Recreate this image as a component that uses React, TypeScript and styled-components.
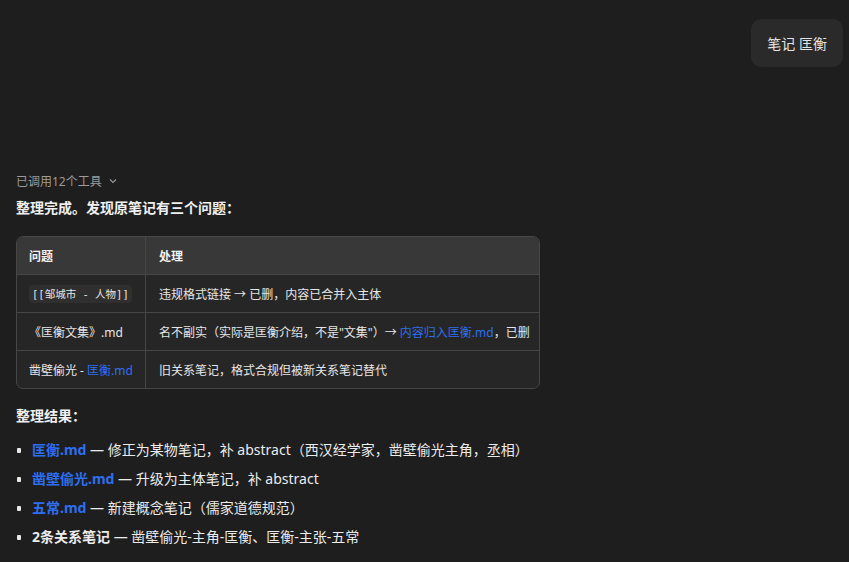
import React from "react";
import styled, { createGlobalStyle } from "styled-components";

const GlobalStyle = createGlobalStyle`
  html, body {
    margin: 0;
    padding: 0;
    background: #1e1e1e;
  }
  body {
    font-family: "Noto Sans", "Noto Sans CJK SC", sans-serif;
    color: #e8e8e8;
  }
`;

const Page = styled.div`
  padding: 19px 6px 0 16px;
  min-height: 562px;
  box-sizing: border-box;
`;

const UserRow = styled.div`
  display: flex;
  justify-content: flex-end;
`;

const Bubble = styled.div`
  background: #2a2a2a;
  border-radius: 10px;
  padding: 0 16px;
  height: 48px;
  display: flex;
  align-items: center;
  font-size: 14px;
  color: #e4e4e4;
`;

const ToolLine = styled.div`
  margin-top: 105px;
  display: flex;
  align-items: center;
  gap: 6px;
  font-size: 12px;
  color: #9b9b9b;
  height: 18px;
`;

const Para = styled.p<{ $top: number }>`
  margin: ${(p) => p.$top}px 0 0;
  font-size: 14px;
  font-weight: 700;
  line-height: 20px;
  color: #f0f0f0;
`;

const TableWrap = styled.div`
  margin-top: 18px;
  display: inline-block;
  border: 1px solid #464646;
  border-radius: 7px;
  overflow: hidden;
  background: #262626;
`;

const Table = styled.table`
  border-collapse: collapse;
  font-size: 12px;
`;

const Th = styled.th`
  background: #383838;
  text-align: left;
  font-weight: 700;
  color: #f2f2f2;
  padding: 0 12px;
  height: 37px;
  & + & {
    border-left: 1px solid #464646;
    padding: 0 9px 0 13px;
  }
`;

const Tr = styled.tr`
  border-top: 1px solid #464646;
`;

const Td = styled.td`
  padding: 0 12px;
  height: 37px;
  color: #e6e6e6;
  white-space: nowrap;
  & + & {
    border-left: 1px solid #464646;
    padding: 0 9px 0 13px;
  }
`;

const Code = styled.code`
  font-family: "DejaVu Sans Mono", "Noto Sans CJK SC", monospace;
  font-size: 10.5px;
  background: #2f2f2f;
  border-radius: 4px;
  padding: 3px 3px;
`;

const Link = styled.span<{ $bold?: boolean }>`
  color: #2d6ff0;
  font-weight: ${(p) => (p.$bold ? 700 : 400)};
`;

const List = styled.ul`
  margin: 14px 0 0;
  padding: 0;
  list-style: none;
  display: flex;
  flex-direction: column;
  gap: 9px;
`;

const Item = styled.li`
  position: relative;
  padding-left: 16px;
  font-size: 14px;
  line-height: 20px;
  color: #ececec;
  &::before {
    content: "";
    position: absolute;
    left: 1px;
    top: 8px;
    width: 4px;
    height: 5px;
    border-radius: 1px;
    background: #e8e8e8;
  }
`;

const Strong = styled.b`
  font-weight: 700;
`;

const Chevron = () => (
  <svg width="10" height="10" viewBox="0 0 10 10" fill="none">
    <path d="M2 3.5 L5 6.5 L8 3.5" stroke="#9b9b9b" strokeWidth="1.1" />
  </svg>
);

const rows = [
  {
    issue: <Code>[[邹城市 - 人物]]</Code>,
    fix: <>违规格式链接 → 已删，内容已合并入主体</>,
  },
  {
    issue: <>《匡衡文集》.md</>,
    fix: (
      <>
        名不副实（实际是匡衡介绍，不是"文集"）→ <Link>内容归入匡衡.md</Link>，已删
      </>
    ),
  },
  {
    issue: (
      <>
        凿壁偷光 - <Link>匡衡.md</Link>
      </>
    ),
    fix: <>旧关系笔记，格式合规但被新关系笔记替代</>,
  },
];

export default function App() {
  return (
    <>
      <GlobalStyle />
      <Page>
        <UserRow>
          <Bubble>笔记 匡衡</Bubble>
        </UserRow>
        <ToolLine>
          已调用12个工具 <Chevron />
        </ToolLine>
        <Para $top={8}>整理完成。发现原笔记有三个问题：</Para>
        <TableWrap>
          <Table>
            <thead>
              <tr>
                <Th>问题</Th>
                <Th>处理</Th>
              </tr>
            </thead>
            <tbody>
              {rows.map((r, i) => (
                <Tr key={i}>
                  <Td>{r.issue}</Td>
                  <Td>{r.fix}</Td>
                </Tr>
              ))}
            </tbody>
          </Table>
        </TableWrap>
        <Para $top={12}>整理结果：</Para>
        <List>
          <Item>
            <Link $bold>匡衡.md</Link> — 修正为某物笔记，补 abstract（西汉经学家，凿壁偷光主角，丞相）
          </Item>
          <Item>
            <Link $bold>凿壁偷光.md</Link> — 升级为主体笔记，补 abstract
          </Item>
          <Item>
            <Link $bold>五常.md</Link> — 新建概念笔记（儒家道德规范）
          </Item>
          <Item>
            <Strong>2条关系笔记</Strong> — 凿壁偷光-主角-匡衡、匡衡-主张-五常
          </Item>
        </List>
      </Page>
    </>
  );
}
